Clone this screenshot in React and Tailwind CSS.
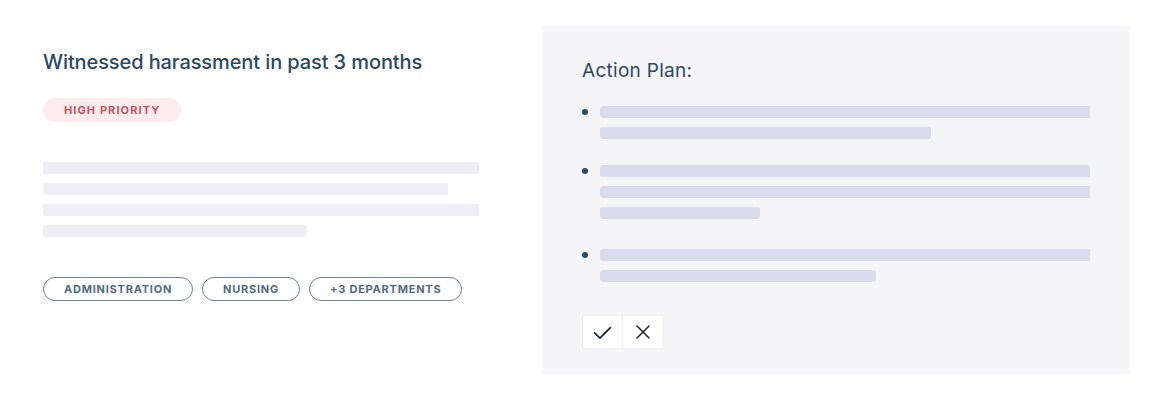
import React from 'react';

const leftLines = [436, 405, 436, 264];

const planItems = [
  { lines: [490, 331], mt: 'mt-0' },
  { lines: [490, 490, 160], mt: 'mt-[26px]' },
  { lines: [490, 276], mt: 'mt-[30px]' },
];

const tags = ['Administration', 'Nursing', '+3 Departments'];

function CheckIcon() {
  return (
    <svg width="21" height="21" viewBox="0 0 24 24" fill="none" stroke="#1c2633" strokeWidth="2" strokeLinecap="round" strokeLinejoin="round">
      <path d="M3 12.5l6 6L21 6.5" />
    </svg>
  );
}

function XIcon() {
  return (
    <svg width="18" height="18" viewBox="0 0 24 24" fill="none" stroke="#1c2633" strokeWidth="2" strokeLinecap="round">
      <path d="M4 4l16 16M20 4L4 20" />
    </svg>
  );
}

export default function App() {
  return (
    <div className="w-[1163px] h-[407px] bg-white flex pl-[43px] pt-[26px]" style={{ fontFamily: 'Inter, "Noto Sans", sans-serif' }}>
      {/* left: issue card */}
      <div className="w-[436px] pt-[23px]">
        <h2 className="text-[20px] leading-[26px] font-medium text-[#2b4a62] tracking-[-0.005em]">
          Witnessed harassment in past 3 months
        </h2>
        <div className="mt-[21px]">
          <span className="inline-flex items-center h-[24px] px-[21px] rounded-full bg-[#fcecee] text-[#c4535d] text-[11px] font-bold tracking-[0.1em] uppercase">
            High Priority
          </span>
        </div>
        <div className="mt-[40px] flex flex-col gap-[9px]">
          {leftLines.map((w, i) => (
            <div key={i} className="h-[12px] rounded-[2px] bg-[#eeeef4]" style={{ width: w }} />
          ))}
        </div>
        <div className="mt-[40px] flex gap-[9px]">
          {tags.map((t) => (
            <span key={t} className="inline-flex items-center whitespace-nowrap h-[24px] px-[20px] rounded-full border border-[#6c8396] text-[#526b81] text-[11px] font-bold tracking-[0.07em] uppercase">
              {t}
            </span>
          ))}
        </div>
      </div>

      {/* right: action plan panel */}
      <div className="ml-[63px] w-[588px] h-[348px] bg-[#f5f5f8] rounded-[2px] pl-[40px] pt-[33px]">
        <h3 className="text-[19px] leading-[24px] tracking-[0.015em] text-[#2b4a62]">Action Plan:</h3>
        <div className="mt-[23px]">
          {planItems.map((item, i) => (
            <div key={i} className={`flex ${item.mt}`}>
              <div className="w-[18px] pt-[3px]">
                <div className="w-[6px] h-[6px] rounded-full bg-[#2b4a62]" />
              </div>
              <div className="flex flex-col gap-[9px]">
                {item.lines.map((w, j) => (
                  <div key={j} className="h-[12px] rounded-[2px] bg-[#d9dcec]" style={{ width: w }} />
                ))}
              </div>
            </div>
          ))}
        </div>
        <div className="mt-[33px] inline-flex h-[34px] bg-white border border-[#eceef3] rounded-[3px]">
          <button className="w-[40px] flex items-center justify-center border-r border-[#eceef3]">
            <CheckIcon />
          </button>
          <button className="w-[40px] flex items-center justify-center">
            <XIcon />
          </button>
        </div>
      </div>
    </div>
  );
}
